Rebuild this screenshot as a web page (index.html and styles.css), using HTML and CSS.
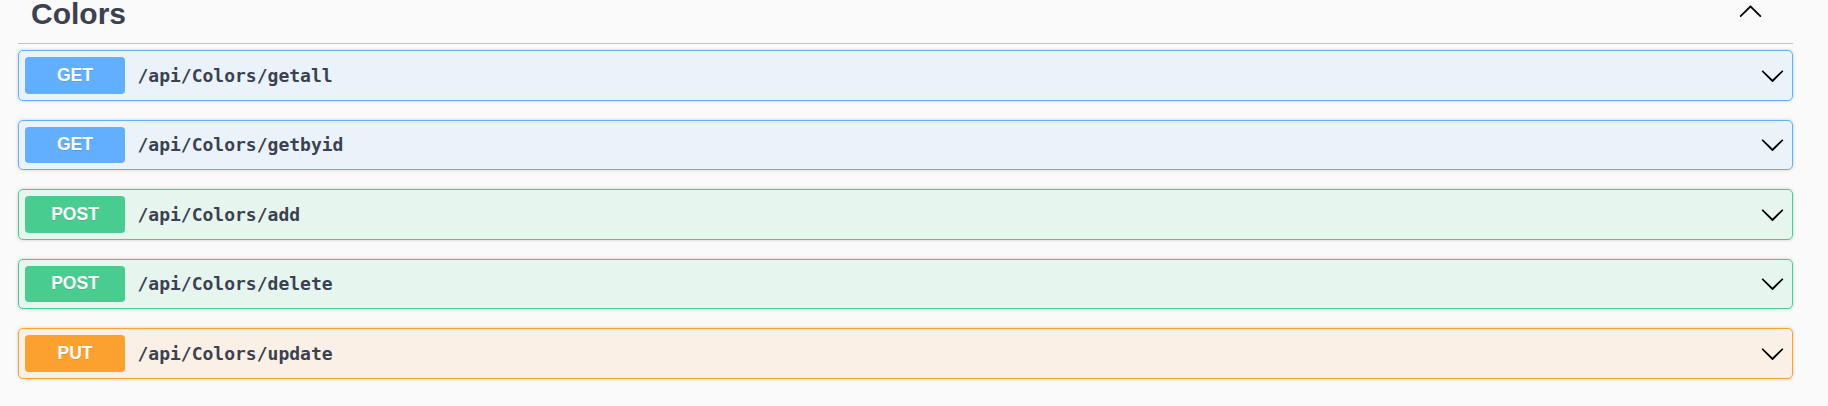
FILE: index.html
```html
<!DOCTYPE html>
<html>
<head>
<meta charset="utf-8">
<link rel="stylesheet" href="styles.css">
</head>
<body>
<div class="tag-section">
  <h3 class="tag-title">
    <span class="tag-name">Colors</span>
    <svg class="arrow-up" width="25" height="25" viewBox="0 0 20 20"><path d="M17.418 14.908c.272.268.709.268.979 0s.271-.701 0-.969l-7.908-7.83c-.27-.268-.707-.268-.979 0l-7.908 7.83c-.27.268-.27.701 0 .969.271.268.709.268.979 0L10 7.767l7.418 7.141z"/></svg>
  </h3>
  <div class="opblock get">
    <span class="method">GET</span>
    <span class="path">/api/Colors/getall</span>
    <svg class="arrow" width="25" height="25" viewBox="0 0 20 20"><path d="M17.418 6.109c.272-.268.709-.268.979 0s.271.701 0 .969l-7.908 7.83c-.27.268-.707.268-.979 0l-7.908-7.83c-.27-.268-.27-.701 0-.969.271-.268.709-.268.979 0L10 13.25l7.418-7.141z"/></svg>
  </div>
  <div class="opblock get">
    <span class="method">GET</span>
    <span class="path">/api/Colors/getbyid</span>
    <svg class="arrow" width="25" height="25" viewBox="0 0 20 20"><path d="M17.418 6.109c.272-.268.709-.268.979 0s.271.701 0 .969l-7.908 7.83c-.27.268-.707.268-.979 0l-7.908-7.83c-.27-.268-.27-.701 0-.969.271-.268.709-.268.979 0L10 13.25l7.418-7.141z"/></svg>
  </div>
  <div class="opblock post">
    <span class="method">POST</span>
    <span class="path">/api/Colors/add</span>
    <svg class="arrow" width="25" height="25" viewBox="0 0 20 20"><path d="M17.418 6.109c.272-.268.709-.268.979 0s.271.701 0 .969l-7.908 7.83c-.27.268-.707.268-.979 0l-7.908-7.83c-.27-.268-.27-.701 0-.969.271-.268.709-.268.979 0L10 13.25l7.418-7.141z"/></svg>
  </div>
  <div class="opblock post">
    <span class="method">POST</span>
    <span class="path">/api/Colors/delete</span>
    <svg class="arrow" width="25" height="25" viewBox="0 0 20 20"><path d="M17.418 6.109c.272-.268.709-.268.979 0s.271.701 0 .969l-7.908 7.83c-.27.268-.707.268-.979 0l-7.908-7.83c-.27-.268-.27-.701 0-.969.271-.268.709-.268.979 0L10 13.25l7.418-7.141z"/></svg>
  </div>
  <div class="opblock put">
    <span class="method">PUT</span>
    <span class="path">/api/Colors/update</span>
    <svg class="arrow" width="25" height="25" viewBox="0 0 20 20"><path d="M17.418 6.109c.272-.268.709-.268.979 0s.271.701 0 .969l-7.908 7.83c-.27.268-.707.268-.979 0l-7.908-7.83c-.27-.268-.27-.701 0-.969.271-.268.709-.268.979 0L10 13.25l7.418-7.141z"/></svg>
  </div>
</div>
</body>
</html>
```
FILE: styles.css
```css
html, body {
  margin: 0;
  padding: 0;
  background: #fafafa;
  font-family: "Liberation Sans", Arial, sans-serif;
  color: #3b4151;
}

.tag-section {
  width: 1775px;
  margin-left: 18px;
}

.tag-title {
  box-sizing: border-box;
  height: 44px;
  margin: 0 0 6px 0;
  padding: 0 30px 12.5px 13px;
  display: flex;
  align-items: flex-end;
  justify-content: space-between;
  border-bottom: 1px solid rgba(59, 65, 81, 0.3);
  font-size: 30px;
  font-weight: 700;
  line-height: 34px;
  color: #3b4151;
}

.tag-name {
  display: block;
}

.arrow-up {
  margin-bottom: 8px;
  fill: #000;
}

.opblock {
  box-sizing: border-box;
  height: 50.5px;
  margin-bottom: 19px;
  padding: 0 7px 0 6px;
  display: flex;
  align-items: center;
  border: 1px solid;
  border-radius: 5px;
  box-shadow: 0 0 3.75px rgba(0, 0, 0, 0.19);
}

.opblock.get {
  background: rgba(97, 175, 254, 0.1);
  border-color: #61affe;
}
.opblock.get .method { background: #61affe; }

.opblock.post {
  background: rgba(73, 204, 144, 0.1);
  border-color: #49cc90;
}
.opblock.post .method { background: #49cc90; }

.opblock.put {
  background: rgba(252, 161, 48, 0.1);
  border-color: #fca130;
}
.opblock.put .method { background: #fca130; }

.method {
  width: 100px;
  height: 36.5px;
  display: flex;
  align-items: center;
  justify-content: center;
  border-radius: 3.75px;
  color: #fff;
  font-family: "Liberation Sans", Arial, sans-serif;
  font-size: 17.5px;
  font-weight: 700;
  text-shadow: 0 1px 0 rgba(0, 0, 0, 0.1);
}

.path {
  flex: 1;
  padding: 0 12.5px;
  font-family: "DejaVu Sans Mono", monospace;
  font-size: 18px;
  font-weight: 700;
  color: #3b4151;
}

.arrow {
  fill: #000;
}
```
